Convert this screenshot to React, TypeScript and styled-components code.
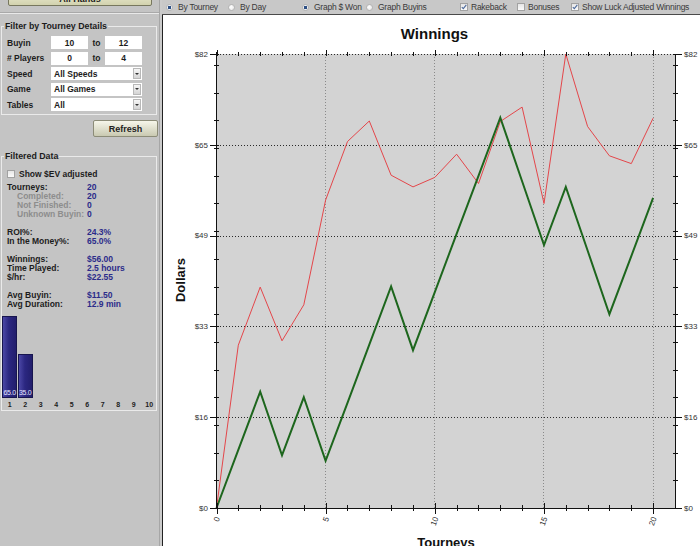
import React from "react";
import styled, { createGlobalStyle } from "styled-components";

const GlobalStyle = createGlobalStyle`
  html, body {
    margin: 0;
    padding: 0;
  }
  body {
    width: 700px;
    height: 546px;
    overflow: hidden;
    background: #c4c4c4;
    font-family: "Liberation Sans", Arial, sans-serif;
  }
  * {
    box-sizing: border-box;
  }
`;

// chart data, read off the graph
const luckAdjusted = [
  0, 29.4, 39.9, 30.2, 36.7, 55.6, 66.2, 69.9, 60.1, 58.0, 59.7, 63.9, 58.6,
  69.8, 72.4, 55.0, 82.0, 68.9, 63.6, 62.2, 70.4,
];
const actual = [
  0, 10.5, 21, 9.5, 20, 8.5, 19, 29.5, 40, 28.5, 39, 49.5, 60, 70.5, 59, 47.5,
  58, 46.5, 35, 45.5, 56,
];
const yMajors = [
  { v: 0, label: "$0" },
  { v: 16.4, label: "$16" },
  { v: 32.8, label: "$33" },
  { v: 49.2, label: "$49" },
  { v: 65.6, label: "$65" },
  { v: 82, label: "$82" },
];
const histogram = [65, 35, 0, 0, 0, 0, 0, 0, 0, 0];

const X = (t: number) => 216.5 + t * 21.83;
const Y = (v: number) => 508 - v * 5.537;
const PLOT_RIGHT = 675;

const Screen = styled.div`
  display: flex;
  width: 700px;
  height: 546px;
  overflow: hidden;
`;

const Sidebar = styled.div`
  width: 160px;
  flex: none;
  display: flex;
  flex-direction: column;
  background: #c4c4c4;
  border-right: 1px solid #a6a6a6;
  font-size: 8.5px;
  font-weight: bold;
  color: #1c1c1c;
`;

const Gutter = styled.div`
  width: 2px;
  flex: none;
  background: #cbcbcb;
`;

const Main = styled.div`
  flex: 1;
  min-width: 0;
  display: flex;
  flex-direction: column;
`;

const Toolbar = styled.div`
  height: 15px;
  flex: none;
  display: flex;
  align-items: center;
  padding-left: 4px;
  background: #c8c8c8;
  border-bottom: 1px solid #4a4a4a;
  font-size: 8.5px;
  letter-spacing: -0.25px;
  color: #3a3a3a;
`;

const Option = styled.label<{ $w?: number; $gap: number }>`
  display: flex;
  align-items: center;
  gap: ${(p) => p.$gap}px;
  width: ${(p) => (p.$w ? `${p.$w}px` : "auto")};
  flex: none;
  white-space: nowrap;
`;

const Radio = styled.span<{ $on?: boolean }>`
  width: 7px;
  height: 7px;
  flex: none;
  border-radius: 50%;
  border: 1px solid #b4b4b4;
  background: ${(p) =>
    p.$on
      ? "radial-gradient(circle, #2d4f84 0 1.5px, #eef0f4 2px)"
      : "radial-gradient(circle at 40% 40%, #ffffff, #e2e2e2)"};
`;

const CheckBox = styled.span`
  width: 8px;
  height: 8px;
  flex: none;
  display: flex;
  align-items: center;
  justify-content: center;
  border: 1px solid #a2a2a2;
  background: linear-gradient(#e6e6e6, #fbfbfb);
`;

const ChartFrame = styled.div`
  flex: 1;
  background: #ffffff;
  border-left: 1px solid #222222;
  overflow: hidden;
`;

const TopButton = styled.div`
  height: 18px;
  margin: -12px 7px 0 8px;
  border: 1px solid #77775e;
  border-radius: 2px;
  background: linear-gradient(#f2f2dc, #d2d2ae);
  text-align: center;
  font-size: 9px;
  line-height: 21px;
`;

const Divider = styled.div`
  height: 2px;
  margin-top: 6px;
  border-top: 1px solid #a9a9a9;
  border-bottom: 1px solid #e9e9e9;
`;

const Group = styled.fieldset<{ $top: number; $pad: string }>`
  margin: ${(p) => p.$top}px 2px 0 1px;
  padding: ${(p) => p.$pad};
  min-width: 0;
  border: 1px solid #eaeaea;
`;

const Legend = styled.legend`
  margin-left: 2px;
  padding: 0 1px;
  font-size: 8.8px;
  line-height: 9px;
  font-weight: bold;
`;

const FilterRows = styled.div`
  display: flex;
  flex-direction: column;
  gap: 2.5px;
  padding-left: 5px;
`;

const FilterRow = styled.div`
  display: grid;
  grid-template-columns: 44px 37px 17px 37px;
  align-items: center;
  height: 13px;
`;

const Field = styled.div<{ $center?: boolean }>`
  height: 13px;
  display: flex;
  align-items: center;
  justify-content: ${(p) => (p.$center ? "center" : "flex-start")};
  padding: 0 3px;
  background: #ffffff;
`;

const To = styled.span`
  text-align: center;
`;

const Select = styled(Field)`
  grid-column: 2 / span 3;
  justify-content: space-between;
  padding-right: 1px;
`;

const DropButton = styled.span`
  width: 8px;
  height: 11px;
  display: flex;
  align-items: center;
  justify-content: center;
  border: 1px solid #b8b8b8;
  background: linear-gradient(#f6f6f6, #d4d4d4);

  &::after {
    content: "";
    border-left: 2px solid transparent;
    border-right: 2px solid transparent;
    border-top: 2px solid #333333;
  }
`;

const RefreshButton = styled.div`
  width: 65px;
  height: 17px;
  margin: 5px 0 0 93px;
  display: flex;
  align-items: center;
  justify-content: center;
  border: 1px solid #8c8c78;
  border-radius: 2px;
  background: linear-gradient(#f6f6ea, #c9c9b1);
  font-size: 9px;
  color: #222222;
`;

const EvRow = styled.div`
  display: flex;
  align-items: center;
  gap: 4px;
  height: 9px;
  padding-left: 5px;
`;

const Stats = styled.div`
  display: grid;
  grid-template-columns: 80px 1fr;
  grid-auto-rows: 9px;
  line-height: 9px;
  margin-top: 4.2px;
  padding-left: 5px;
`;

const StatLabel = styled.span<{ $sub?: boolean }>`
  padding-left: ${(p) => (p.$sub ? 10 : 0)}px;
  color: ${(p) => (p.$sub ? "#8d8d8d" : "#1c1c1c")};
  white-space: nowrap;
`;

const StatValue = styled.span`
  color: #2b2b8a;
  white-space: nowrap;
`;

const StatGap = styled.span`
  grid-column: 1 / span 2;
  height: 9.5px;
`;

const Bars = styled.div`
  display: flex;
  align-items: flex-end;
  height: 84px;
  margin-top: 4.8px;
`;

const Bin = styled.div`
  width: 15.5px;
  flex: none;
  display: flex;
  justify-content: center;
`;

const Bar = styled.div`
  width: 15px;
  display: flex;
  align-items: flex-end;
  justify-content: center;
  border: 1px solid #17154f;
  background: linear-gradient(90deg, #4b47a6, #2b2781 45%, #221e6c);
  font-size: 7px;
  font-weight: normal;
  letter-spacing: -0.3px;
  line-height: 8px;
  color: #e6e6ff;
`;

const BinLabels = styled.div`
  display: flex;
  height: 9px;
  margin: 2.2px 0 1px;
  font-size: 7px;
  line-height: 9px;
`;

const BinLabel = styled.span`
  width: 15.5px;
  flex: none;
  text-align: center;
`;

const ChartSvg = styled.svg`
  display: block;
  font-family: "Liberation Sans", Arial, sans-serif;
`;

const ChartTitle = styled.text`
  font-size: 15px;
  font-weight: bold;
  fill: #111111;
`;

const AxisTitle = styled.text`
  font-size: 13px;
  font-weight: bold;
  fill: #111111;
`;

const TickLabel = styled.text`
  font-size: 8px;
  fill: #333333;
`;

const Check = () => (
  <svg width="6" height="6" viewBox="0 0 6 6">
    <path d="M0.8 3.2 L2.3 4.7 L5.3 0.9" fill="none" stroke="#4d6a9c" strokeWidth="1.1" />
  </svg>
);

const points = (data: number[]) =>
  data.map((v, i) => `${X(i).toFixed(1)},${Y(v).toFixed(1)}`).join(" ");

const Chart: React.FC = () => {
  const tourneys = Array.from({ length: 21 }, (_, i) => i);
  const fives = Array.from({ length: 16 }, (_, i) => (i + 1) * 5);

  return (
    <ChartSvg width={537} height={531} viewBox="163 15 537 531">
      <rect x={216.5} y={54} width={PLOT_RIGHT - 216.5} height={454} fill="#d3d3d3" />

      <ChartTitle x={434.5} y={39} textAnchor="middle">
        Winnings
      </ChartTitle>
      <AxisTitle transform="translate(185,280) rotate(-90)" textAnchor="middle">
        Dollars
      </AxisTitle>
      <AxisTitle x={446} y={547} textAnchor="middle">
        Tourneys
      </AxisTitle>

      {/* grid */}
      <g shapeRendering="crispEdges">
        {[5, 10, 15, 20].map((t) => (
          <line
            key={t}
            x1={X(t)}
            x2={X(t)}
            y1={54}
            y2={508}
            stroke="#8a8a8a"
            strokeDasharray="1 2"
          />
        ))}
        {yMajors.slice(1).map((m) => (
          <line
            key={m.v}
            x1={216.5}
            x2={PLOT_RIGHT}
            y1={Math.round(Y(m.v)) + 0.5}
            y2={Math.round(Y(m.v)) + 0.5}
            stroke="#2a2a2a"
            strokeDasharray="1 2"
          />
        ))}
      </g>

      <polyline points={points(luckAdjusted)} fill="none" stroke="#e4464a" strokeWidth={1} />
      <polyline
        points={points(actual)}
        fill="none"
        stroke="#1d661d"
        strokeWidth={2}
        strokeLinejoin="miter"
      />

      {/* axes and ticks */}
      <g stroke="#111111" strokeWidth={1} shapeRendering="crispEdges">
        <line x1={216.5} x2={216.5} y1={52} y2={508.5} />
        <line x1={PLOT_RIGHT + 0.5} x2={PLOT_RIGHT + 0.5} y1={54} y2={508.5} />
        <line x1={216.5} x2={PLOT_RIGHT + 3} y1={508.5} y2={508.5} />

        {fives.map((v) => (
          <g key={v}>
            <line x1={214} x2={219} y1={Math.round(Y(v)) + 0.5} y2={Math.round(Y(v)) + 0.5} />
            <line
              x1={PLOT_RIGHT - 2}
              x2={PLOT_RIGHT + 3}
              y1={Math.round(Y(v)) + 0.5}
              y2={Math.round(Y(v)) + 0.5}
            />
          </g>
        ))}
        {yMajors.map((m) => (
          <g key={m.v}>
            <line x1={210} x2={219} y1={Math.round(Y(m.v)) + 0.5} y2={Math.round(Y(m.v)) + 0.5} />
            <line
              x1={PLOT_RIGHT - 2}
              x2={PLOT_RIGHT + 7}
              y1={Math.round(Y(m.v)) + 0.5}
              y2={Math.round(Y(m.v)) + 0.5}
            />
          </g>
        ))}
        {tourneys.map((t) => {
          const major = t % 5 === 0;
          const x = Math.round(X(t)) + 0.5;
          return (
            <g key={t}>
              <line x1={x} x2={x} y1={major ? 503 : 505} y2={major ? 514 : 511} />
              <line x1={x} x2={x} y1={major ? 50 : 52} y2={56} />
            </g>
          );
        })}
      </g>

      {yMajors.map((m) => (
        <g key={m.v}>
          <TickLabel x={208} y={Y(m.v)} dy="0.35em" textAnchor="end">
            {m.label}
          </TickLabel>
          <TickLabel x={684} y={Y(m.v)} dy="0.35em">
            {m.label}
          </TickLabel>
        </g>
      ))}
      {[0, 5, 10, 15, 20].map((t) => (
        <TickLabel
          key={t}
          transform={`translate(${X(t) + 1},517) rotate(-70)`}
          dy="0.35em"
          textAnchor="end"
        >
          {t}
        </TickLabel>
      ))}
    </ChartSvg>
  );
};

const FilteredData: React.FC = () => (
  <Group $top={15.2} $pad="8.8px 0 0 0">
    <Legend>Filtered Data</Legend>
    <EvRow>
      <CheckBox />
      <span>Show $EV adjusted</span>
    </EvRow>
    <Stats>
      <StatLabel>Tourneys:</StatLabel>
      <StatValue>20</StatValue>
      <StatLabel $sub>Completed:</StatLabel>
      <StatValue>20</StatValue>
      <StatLabel $sub>Not Finished:</StatLabel>
      <StatValue>0</StatValue>
      <StatLabel $sub>Unknown Buyin:</StatLabel>
      <StatValue>0</StatValue>
      <StatGap />
      <StatLabel>ROI%:</StatLabel>
      <StatValue>24.3%</StatValue>
      <StatLabel>In the Money%:</StatLabel>
      <StatValue>65.0%</StatValue>
      <StatGap />
      <StatLabel>Winnings:</StatLabel>
      <StatValue>$56.00</StatValue>
      <StatLabel>Time Played:</StatLabel>
      <StatValue>2.5 hours</StatValue>
      <StatLabel>$/hr:</StatLabel>
      <StatValue>$22.55</StatValue>
      <StatGap />
      <StatLabel>Avg Buyin:</StatLabel>
      <StatValue>$11.50</StatValue>
      <StatLabel>Avg Duration:</StatLabel>
      <StatValue>12.9 min</StatValue>
    </Stats>
    <Bars>
      {histogram.map((pct, i) => (
        <Bin key={i}>
          {pct > 0 && <Bar style={{ height: pct * 1.26 }}>{pct.toFixed(1)}</Bar>}
        </Bin>
      ))}
    </Bars>
    <BinLabels>
      {histogram.map((_, i) => (
        <BinLabel key={i}>{i + 1}</BinLabel>
      ))}
    </BinLabels>
  </Group>
);

const App: React.FC = () => (
  <>
    <GlobalStyle />
    <Screen>
      <Sidebar>
        <TopButton>All Hands</TopButton>
        <Divider />
        <Group $top={7.5} $pad="5.5px 0 3px 0">
          <Legend>Filter by Tourney Details</Legend>
          <FilterRows>
            <FilterRow>
              <span>Buyin</span>
              <Field $center>10</Field>
              <To>to</To>
              <Field $center>12</Field>
            </FilterRow>
            <FilterRow>
              <span># Players</span>
              <Field $center>0</Field>
              <To>to</To>
              <Field $center>4</Field>
            </FilterRow>
            <FilterRow>
              <span>Speed</span>
              <Select>
                All Speeds
                <DropButton />
              </Select>
            </FilterRow>
            <FilterRow>
              <span>Game</span>
              <Select>
                All Games
                <DropButton />
              </Select>
            </FilterRow>
            <FilterRow>
              <span>Tables</span>
              <Select>
                All
                <DropButton />
              </Select>
            </FilterRow>
          </FilterRows>
        </Group>
        <RefreshButton>Refresh</RefreshButton>
        <FilteredData />
      </Sidebar>
      <Gutter />
      <Main>
        <Toolbar>
          <Option $w={62} $gap={5}>
            <Radio $on />
            By Tourney
          </Option>
          <Option $w={74} $gap={5}>
            <Radio />
            By Day
          </Option>
          <Option $w={64} $gap={5}>
            <Radio $on />
            Graph $ Won
          </Option>
          <Option $w={94} $gap={5}>
            <Radio />
            Graph Buyins
          </Option>
          <Option $w={57} $gap={3}>
            <CheckBox>
              <Check />
            </CheckBox>
            Rakeback
          </Option>
          <Option $w={54} $gap={3}>
            <CheckBox />
            Bonuses
          </Option>
          <Option $gap={3}>
            <CheckBox>
              <Check />
            </CheckBox>
            Show Luck Adjusted Winnings
          </Option>
        </Toolbar>
        <ChartFrame>
          <Chart />
        </ChartFrame>
      </Main>
    </Screen>
  </>
);

export default App;
